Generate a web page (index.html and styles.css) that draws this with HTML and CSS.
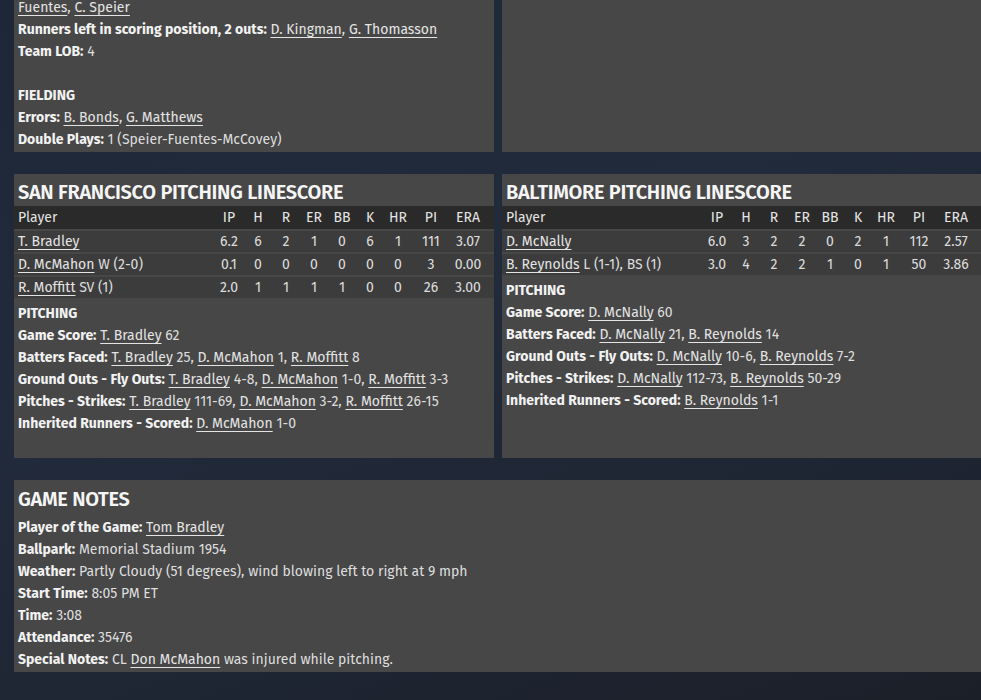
FILE: index.html
```html
<!DOCTYPE html>
<html>
<head>
<meta charset="utf-8">
<link rel="stylesheet" href="styles.css">
</head>
<body>
<div class="page">
  <div class="grid">
    <section class="panel box-top">
      <p><a>Fuentes</a>, <a>C. Speier</a></p>
      <p><b>Runners left in scoring position, 2 outs:</b> <a>D. Kingman</a>, <a>G. Thomasson</a></p>
      <p><b>Team LOB:</b> 4</p>
      <p>&nbsp;</p>
      <p><b>FIELDING</b></p>
      <p><b>Errors:</b> <a>B. Bonds</a>, <a>G. Matthews</a></p>
      <p><b>Double Plays:</b> 1 (Speier-Fuentes-McCovey)</p>
    </section>
    <section class="panel"></section>
  </div>

  <div class="grid">
    <section class="panel pitch">
      <h2 class="title">SAN FRANCISCO PITCHING LINESCORE</h2>
      <table class="line">
        <thead>
          <tr><th class="pl">Player</th><th class="c-ip">IP</th><th>H</th><th>R</th><th>ER</th><th>BB</th><th>K</th><th>HR</th><th class="c-pi">PI</th><th class="c-era">ERA</th></tr>
        </thead>
        <tbody>
          <tr><td class="pl"><a>T. Bradley</a></td><td>6.2</td><td>6</td><td>2</td><td>1</td><td>0</td><td>6</td><td>1</td><td>111</td><td class="c-era">3.07</td></tr>
          <tr><td class="pl"><a>D. McMahon</a> W (2-0)</td><td>0.1</td><td>0</td><td>0</td><td>0</td><td>0</td><td>0</td><td>0</td><td>3</td><td class="c-era">0.00</td></tr>
          <tr><td class="pl"><a>R. Moffitt</a> SV (1)</td><td>2.0</td><td>1</td><td>1</td><td>1</td><td>1</td><td>0</td><td>0</td><td>26</td><td class="c-era">3.00</td></tr>
        </tbody>
      </table>
      <div class="notes-list">
        <p><b>PITCHING</b></p>
        <p><b>Game Score:</b> <a>T. Bradley</a> 62</p>
        <p><b>Batters Faced:</b> <a>T. Bradley</a> 25, <a>D. McMahon</a> 1, <a>R. Moffitt</a> 8</p>
        <p><b>Ground Outs - Fly Outs:</b> <a>T. Bradley</a> 4-8, <a>D. McMahon</a> 1-0, <a>R. Moffitt</a> 3-3</p>
        <p><b>Pitches - Strikes:</b> <a>T. Bradley</a> 111-69, <a>D. McMahon</a> 3-2, <a>R. Moffitt</a> 26-15</p>
        <p><b>Inherited Runners - Scored:</b> <a>D. McMahon</a> 1-0</p>
      </div>
    </section>
    <section class="panel pitch">
      <h2 class="title">BALTIMORE PITCHING LINESCORE</h2>
      <table class="line">
        <thead>
          <tr><th class="pl">Player</th><th class="c-ip">IP</th><th>H</th><th>R</th><th>ER</th><th>BB</th><th>K</th><th>HR</th><th class="c-pi">PI</th><th class="c-era">ERA</th></tr>
        </thead>
        <tbody>
          <tr><td class="pl"><a>D. McNally</a></td><td>6.0</td><td>3</td><td>2</td><td>2</td><td>0</td><td>2</td><td>1</td><td>112</td><td class="c-era">2.57</td></tr>
          <tr><td class="pl"><a>B. Reynolds</a> L (1-1), BS (1)</td><td>3.0</td><td>4</td><td>2</td><td>2</td><td>1</td><td>0</td><td>1</td><td>50</td><td class="c-era">3.86</td></tr>
        </tbody>
      </table>
      <div class="notes-list">
        <p><b>PITCHING</b></p>
        <p><b>Game Score:</b> <a>D. McNally</a> 60</p>
        <p><b>Batters Faced:</b> <a>D. McNally</a> 21, <a>B. Reynolds</a> 14</p>
        <p><b>Ground Outs - Fly Outs:</b> <a>D. McNally</a> 10-6, <a>B. Reynolds</a> 7-2</p>
        <p><b>Pitches - Strikes:</b> <a>D. McNally</a> 112-73, <a>B. Reynolds</a> 50-29</p>
        <p><b>Inherited Runners - Scored:</b> <a>B. Reynolds</a> 1-1</p>
      </div>
    </section>
  </div>

  <section class="panel game-notes">
    <h2 class="title notes-title">GAME NOTES</h2>
    <p><b>Player of the Game:</b> <a>Tom Bradley</a></p>
    <p><b>Ballpark:</b> Memorial Stadium 1954</p>
    <p><b>Weather:</b> Partly Cloudy (51 degrees), wind blowing left to right at 9 mph</p>
    <p><b>Start Time:</b> 8:05 PM ET</p>
    <p><b>Time:</b> 3:08</p>
    <p><b>Attendance:</b> 35476</p>
    <p><b>Special Notes:</b> CL <a>Don McMahon</a> was injured while pitching.</p>
  </section>
</div>
</body>
</html>
```

FILE: styles.css
```css
html, body {
  margin: 0;
  padding: 0;
  overflow: hidden;
}
body {
  width: 981px;
  height: 700px;
  background: linear-gradient(160deg, #1e2738 0%, #222b3c 40%, #1e2532 75%, #1b1f28 100%);
  font-family: "Fira Sans", "Lato", "Noto Sans", sans-serif;
  font-size: 14px;
  color: #dedede;
}
.page {
  width: 968px;
  margin: -4px 0 0 14px;
  display: flex;
  flex-direction: column;
  gap: 22px;
}
.grid {
  display: grid;
  grid-template-columns: 480px 480px;
  gap: 8px;
}
.panel {
  background: #474747;
}
p {
  margin: 0;
  padding: 1px 4px 0;
  line-height: 22px;
  height: 21px;
  white-space: nowrap;
}
b {
  font-weight: 700;
  color: #f2f2f2;
}
a {
  color: #e4e4e4;
  text-decoration: underline;
  text-underline-offset: 3px;
  text-decoration-thickness: 1px;
}
.box-top {
  padding-bottom: 2px;
}
.title {
  margin: 0;
  padding: 4px 4px 0;
  line-height: 28px;
  font-size: 20px;
  font-weight: 600;
  letter-spacing: -0.3px;
  color: #f5f5f5;
}
.notes-title {
  padding: 5px 4px 3px;
}
.pitch {
  padding-bottom: 24px;
}
.line {
  width: 100%;
  border-collapse: collapse;
  color: #dcdcdc;
}
.line th {
  background: #2a2a2a;
  font-weight: 400;
  color: #e4e4e4;
  height: 23px;
  padding: 0;
  width: 28px;
  text-align: center;
}
.line td {
  background: #3c3c3c;
  border-top: 2px solid #474747;
  height: 21px;
  padding: 0;
  text-align: center;
  line-height: 21px;
  white-space: nowrap;
}
.line .pl {
  text-align: left;
  padding-left: 4px;
  width: auto;
}
.line .c-ip { width: 30px; }
.line .c-pi { width: 38px; }
.line .c-era { width: 36px; padding-right: 8px; }
.notes-list {
  margin-top: 4px;
}
.game-notes {
  padding-bottom: 2px;
}
```
